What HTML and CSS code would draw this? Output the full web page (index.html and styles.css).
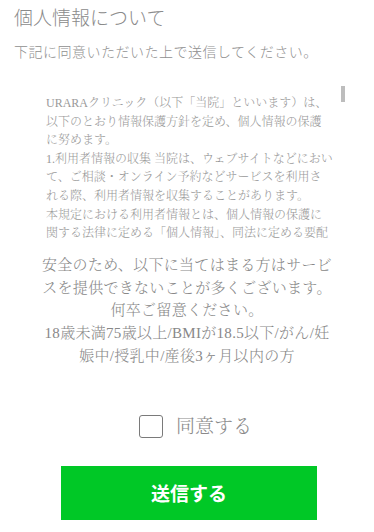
FILE: index.html
```html
<!DOCTYPE html>
<html lang="ja">
<head>
<meta charset="utf-8">
<title>個人情報について</title>
<link rel="stylesheet" href="styles.css">
</head>
<body>
<div class="page">
  <h1 class="title">個人情報について</h1>
  <p class="lead">下記に同意いただいた上で送信してください。</p>
  <div class="policy-wrap">
    <div class="policy">
      <p>URARAクリニック（以下「当院」といいます）は、以下のとおり情報保護方針を定め、個人情報の保護に努めます。</p>
      <p>1.利用者情報の収集 当院は、ウェブサイトなどにおいて、ご相談・オンライン予約などサービスを利用される際、利用者情報を収集することがあります。</p>
      <p>本規定における利用者情報とは、個人情報の保護に関する法律に定める「個人情報」、同法に定める要配慮個人情報（病歴、診療情報等）、その他利用者の識別に係る情報をいいます。</p>
      <p>2.利用目的 当院は、収集した利用者情報を以下の目的で利用いたします。</p>
      <p>(1)診療・カウンセリング・予約の受付および管理のため</p>
      <p>(2)医薬品の処方および配送のため</p>
      <p>(3)料金のご請求およびお支払いの確認のため</p>
      <p>(4)お問い合わせへの対応のため</p>
      <p>(5)サービスの改善および新たなサービスの開発のため</p>
      <p>(6)キャンペーン・お知らせ等のご案内のため</p>
      <p>(7)法令に基づく対応のため</p>
      <p>3.第三者提供 当院は、次の場合を除き、あらかじめ利用者の同意を得ることなく、利用者情報を第三者に提供いたしません。</p>
      <p>(1)法令に基づく場合</p>
      <p>(2)人の生命、身体または財産の保護のために必要がある場合であって、本人の同意を得ることが困難であるとき</p>
      <p>(3)公衆衛生の向上または児童の健全な育成の推進のために特に必要がある場合であって、本人の同意を得ることが困難であるとき</p>
      <p>(4)国の機関もしくは地方公共団体またはその委託を受けた者が法令の定める事務を遂行することに対して協力する必要がある場合</p>
      <p>4.業務委託 当院は、利用目的の達成に必要な範囲内において、利用者情報の取扱いの全部または一部を委託することがあります。この場合、委託先に対して必要かつ適切な監督を行います。</p>
      <p>5.安全管理 当院は、利用者情報の漏えい、滅失またはき損の防止その他の安全管理のために、必要かつ適切な措置を講じます。</p>
      <p>6.開示・訂正・利用停止 利用者は、当院に対し、当院が保有する利用者情報の開示、訂正、追加、削除、利用停止を請求することができます。請求があった場合、当院は本人確認を行ったうえで、法令に従い遅滞なく対応いたします。</p>
      <p>7.Cookie等の利用 当院のウェブサイトでは、利便性の向上および利用状況の分析のため、Cookieおよび類似の技術を使用することがあります。</p>
      <p>8.改定 当院は、法令の変更等に応じて、本方針を予告なく改定することがあります。改定後の方針は、当ウェブサイトに掲載した時点から効力を生じるものとします。</p>
      <p>9.お問い合わせ 本方針に関するお問い合わせは、当院の窓口までご連絡ください。</p>
    </div>
    <span class="policy-thumb"></span>
  </div>
  <p class="notice">安全のため、以下に当てはまる方はサービスを提供できないことが多くございます。<br>何卒ご留意ください。<br>18歳未満75歳以上/BMIが18.5以下/がん/妊娠中/授乳中/産後3ヶ月以内の方</p>
  <label class="agree">
    <input type="checkbox" class="agree-box">
    <span class="agree-text">同意する</span>
  </label>
  <button type="submit" class="submit">送信する</button>
</div>
</body>
</html>
```

FILE: styles.css
```css
html, body {
  margin: 0;
  background: #fff;
}
body {
  font-family: "Noto Sans CJK JP", "Noto Sans", sans-serif;
  color: #888;
}
.page {
  padding: 0 14px;
}
.title {
  margin: 3px 0 0;
  font-size: 19px;
  line-height: 28px;
  font-weight: 300;
  color: #8a8a8a;
}
.lead {
  margin: 10px 0 0;
  font-size: 14px;
  line-height: 20px;
  letter-spacing: 0.5px;
  font-weight: 300;
  color: #8f8f8f;
}
.policy-wrap {
  position: relative;
  margin: 25px 0 0 18px;
  width: 313px;
}
.policy {
  width: 287px;
  height: 146px;
  padding: 8px 12px 0 14px;
  overflow-y: auto;
  scrollbar-width: none;
  font-family: "Liberation Serif", "Noto Serif CJK JP", "Noto Sans CJK JP", serif;
  font-size: 12px;
  line-height: 18.6px;
  font-weight: 300;
  color: #999;
}
.policy::-webkit-scrollbar {
  display: none;
}
.policy p {
  margin: 0;
}
.policy-thumb {
  position: absolute;
  top: 0;
  right: 0;
  width: 4px;
  height: 16px;
  background: #bdbdbd;
}
.notice {
  margin: 14px auto 0;
  width: 296px;
  text-align: center;
  font-family: "Liberation Serif", "Noto Serif CJK JP", "Noto Sans CJK JP", serif;
  font-size: 15px;
  line-height: 22.7px;
  letter-spacing: 0.3px;
  font-weight: 300;
  color: #888;
}
.agree {
  display: flex;
  justify-content: center;
  align-items: center;
  gap: 13px;
  margin-top: 47px;
  padding-left: 17px;
  height: 24px;
}
.agree-box {
  appearance: none;
  -webkit-appearance: none;
  margin: 0;
  width: 24px;
  height: 23px;
  border: 1.5px solid #7a7a7a;
  border-radius: 3px;
  background: #fff;
}
.agree-text {
  font-family: "Liberation Serif", "Noto Serif CJK JP", "Noto Sans CJK JP", serif;
  font-size: 19px;
  line-height: 24px;
  font-weight: 300;
  color: #8a8a8a;
}
.submit {
  display: block;
  margin: 27px 0 0 47px;
  width: 256px;
  height: 54px;
  border: none;
  background: #00c826;
  color: #fff;
  font-family: "Noto Sans CJK JP", "Noto Sans", sans-serif;
  font-size: 19px;
  font-weight: 700;
  padding: 0;
}
```
